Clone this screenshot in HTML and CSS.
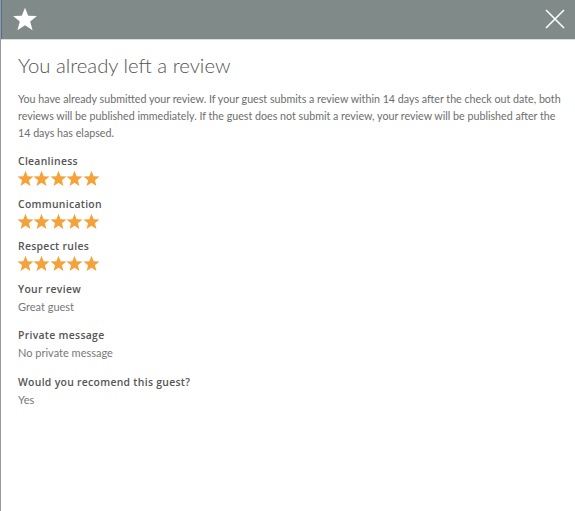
FILE: index.html
```html
<!DOCTYPE html>
<html lang="en">
<head>
  <meta charset="UTF-8" />
  <title>Review</title>
  <link rel="stylesheet" href="styles.css">
</head>
<body>
  <div class="modal">
    <div class="modal-header">
      <svg class="header-star" viewBox="0 0 24 24" width="26" height="26">
        <polygon points="12,1.5 15,9 23,9.3 16.8,14.3 19,22.3 12,17.8 5,22.3 7.2,14.3 1,9.3 9,9" fill="#fff"/>
      </svg>
      <svg class="close-btn" viewBox="0 0 20 20" width="20" height="20">
        <path d="M1 1 L19 19 M19 1 L1 19" stroke="#fff" stroke-width="1.6" fill="none"/>
      </svg>
    </div>

    <div class="modal-body">
      <h1 class="title">You already left a review</h1>
      <p class="intro">You have already submitted your review. If your guest submits a review within 14 days after the check out date, both reviews will be published immediately. If the guest does not submit a review, your review will be published after the 14 days has elapsed.</p>

      <div class="rating">
        <div class="label">Cleanliness</div>
        <div class="stars" data-n="5"></div>
      </div>
      <div class="rating">
        <div class="label">Communication</div>
        <div class="stars" data-n="5"></div>
      </div>
      <div class="rating">
        <div class="label">Respect rules</div>
        <div class="stars" data-n="5"></div>
      </div>

      <div class="field">
        <div class="label">Your review</div>
        <div class="value">Great guest</div>
      </div>
      <div class="field">
        <div class="label">Private message</div>
        <div class="value">No private message</div>
      </div>
      <div class="field">
        <div class="label">Would you recomend this guest?</div>
        <div class="value">Yes</div>
      </div>
    </div>
  </div>

  <script>
    const starSvg = '<svg viewBox="0 0 24 24" width="17" height="17"><polygon points="12,1 15,8.8 23.3,9.2 16.8,14.4 19,22.6 12,18 5,22.6 7.2,14.4 0.7,9.2 9,8.8" fill="#f5a23b"/></svg>';
    document.querySelectorAll('.stars').forEach(el => {
      const n = parseInt(el.dataset.n, 10);
      el.innerHTML = starSvg.repeat(n);
    });
  </script>
</body>
</html>
```

FILE: styles.css
```css
html, body {
  margin: 0;
  padding: 0;
  background: #fff;
  font-family: Lato, "Open Sans", sans-serif;
  height: 100%;
}

.modal {
  min-height: 100%;
  border-left: 1px solid #9a9a9a;
  box-sizing: border-box;
}

.modal-header {
  height: 39px;
  background: #7f8a89;
  border-bottom: 1px solid #d9dddd;
  display: flex;
  align-items: center;
  justify-content: space-between;
  padding: 0 10px 0 11px;
  box-shadow: inset 1px 0 0 #4d6f92;
}

.header-star {
  display: block;
  margin-top: -1px;
}

.close-btn {
  display: block;
  margin-top: -2px;
}

.modal-body {
  padding: 12px 6px 20px 17px;
  color: #555;
}

.title {
  margin: 0 0 12px 0;
  font-size: 20.3px;
  font-weight: 300;
  color: #555;
  line-height: 26px;
}

.intro {
  margin: 0 0 12px 0;
  font-size: 10.7px;
  line-height: 17px;
  color: #6d6d6d;
}

.label {
  font-family: "Open Sans", Lato, sans-serif;
  font-size: 10.4px;
  font-weight: 600;
  letter-spacing: 0.3px;
  color: #555;
  line-height: 16px;
}

.rating {
  margin-bottom: 7.5px;
}

.stars {
  display: flex;
  height: 19px;
  align-items: center;
  margin-left: -1px;
}

.stars svg {
  display: block;
  margin-right: -0.6px;
}

.field {
  margin-bottom: 11.5px;
}

.value {
  font-size: 11px;
  color: #787878;
  line-height: 18px;
  margin-top: 1px;
}
```
